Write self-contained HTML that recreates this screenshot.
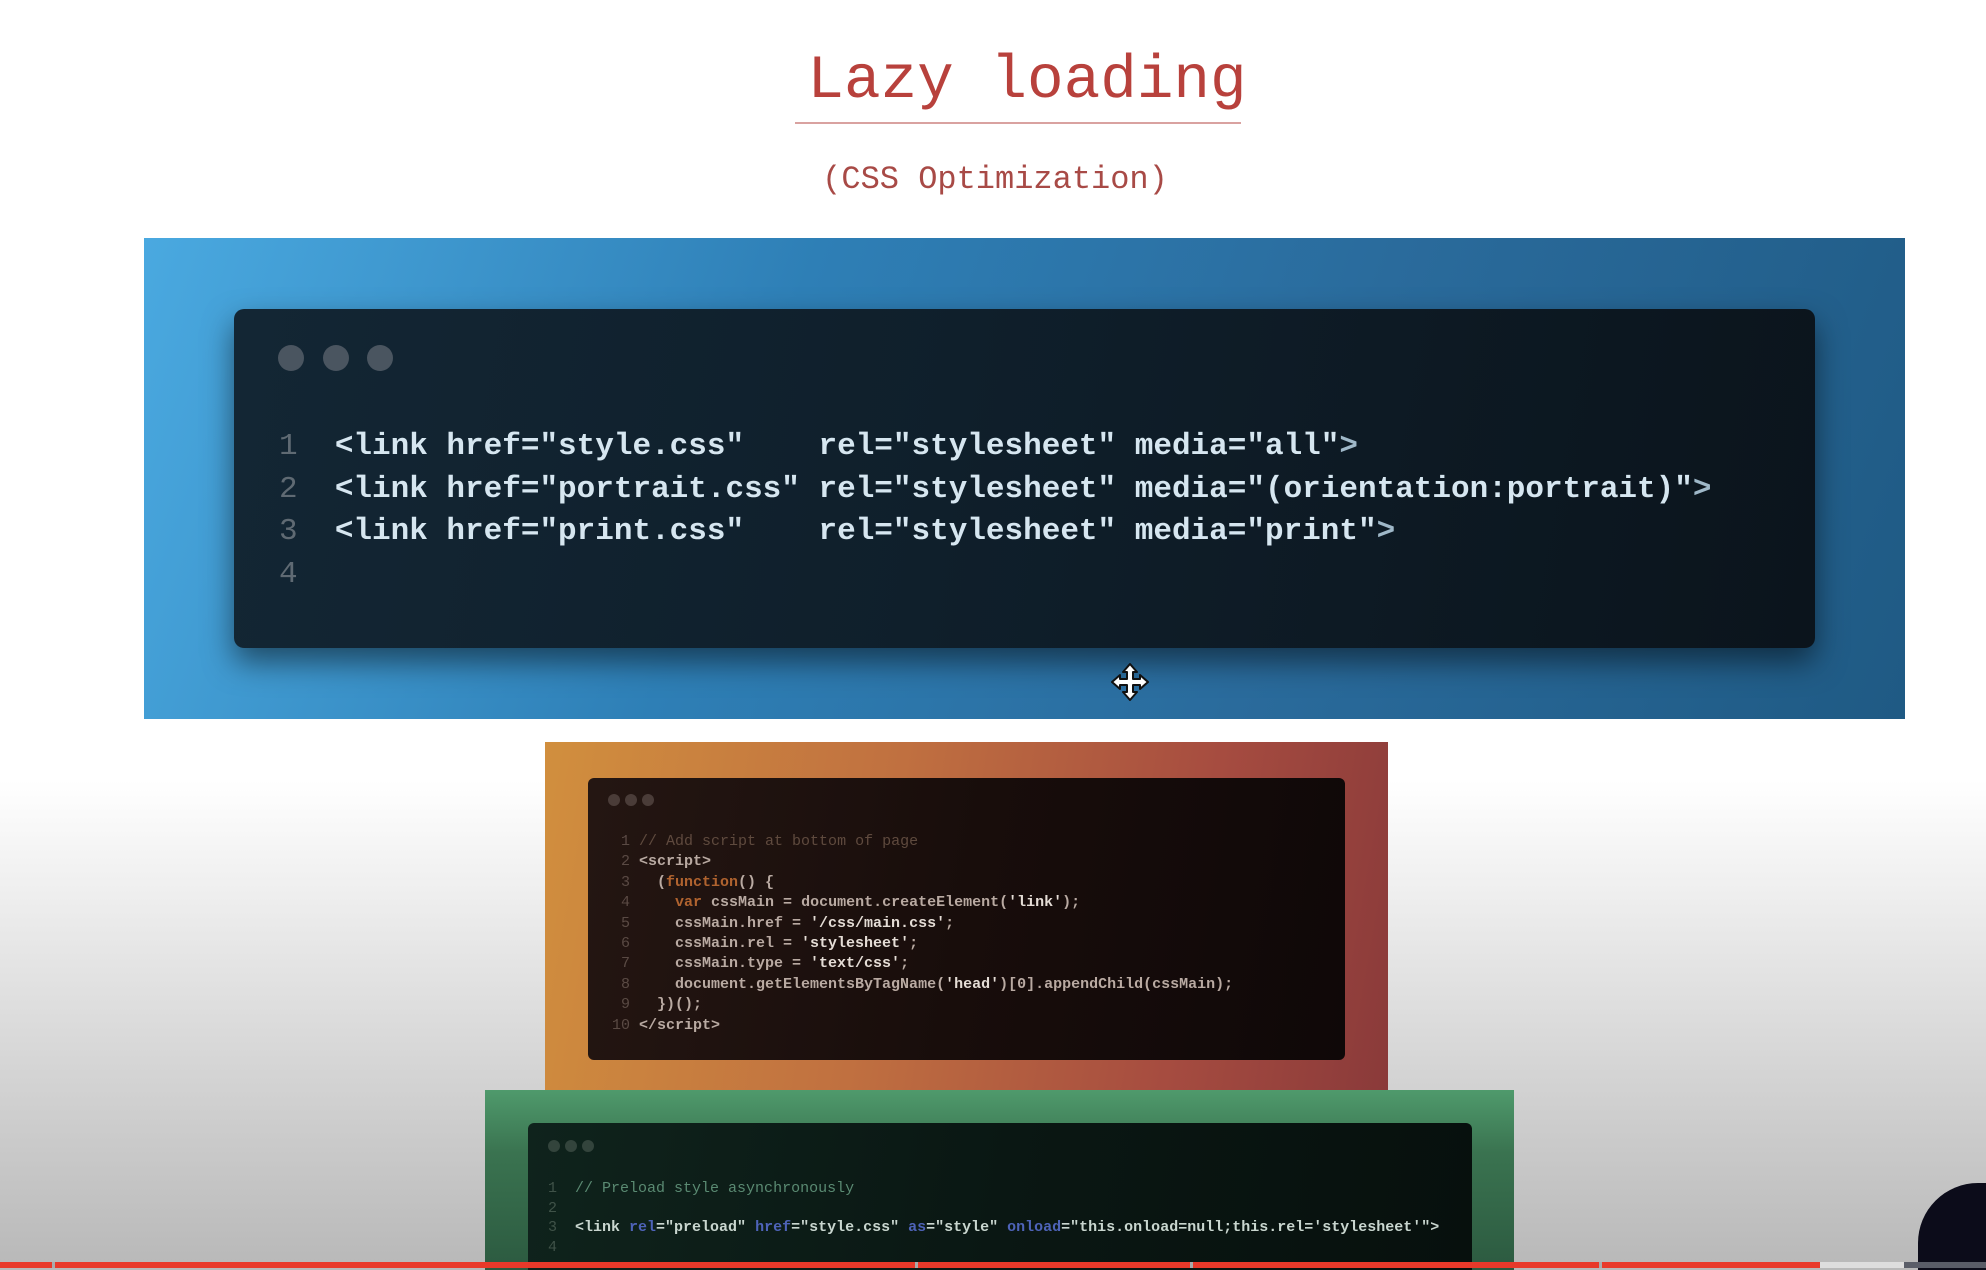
<!DOCTYPE html>
<html><head><meta charset="utf-8"><style>
*{margin:0;padding:0;box-sizing:border-box}
html,body{width:1986px;height:1270px;overflow:hidden}
body{position:relative;font-family:"Liberation Mono",monospace}
#wrap{position:absolute;left:0;top:0;width:1986px;height:1270px;overflow:hidden;background:linear-gradient(#fff 0,#fff 780px,#e6e6e6 950px,#c9c9c9 1150px,#b8b8b8 1270px)}
.abs{position:absolute}
.title{left:0;width:2054px;top:47px;text-align:center;font-size:61px;color:#b8413c}
.uline{left:795px;top:122px;width:446px;height:2px;background:#d9a2a0}
.sub{left:0;width:1990px;top:161px;text-align:center;font-size:32px;color:#a84a46}
.blue{left:144px;top:238px;width:1761px;height:481px;background:linear-gradient(110deg,#4aa9e0 0%,#2e7fb6 35%,#2a6b9c 65%,#1f5a84 100%)}
.win{border-radius:10px;box-shadow:0 14px 30px rgba(0,0,0,.5)}
.w1{left:234px;top:309px;width:1581px;height:339px;background:linear-gradient(100deg,#132634 0%,#0f1f2b 45%,#0b141c 100%)}
.dot{position:absolute;border-radius:50%;background:#4a5560}
.code1{left:279px;top:426px;font-size:31px;font-weight:bold;line-height:42.6px;color:#d6e6f0;white-space:pre}
.code1 .n{color:#5f6a73;font-weight:normal}
.code1 .t{color:#9fb8c8}
.orange{left:545px;top:742px;width:843px;height:348px;background:linear-gradient(100deg,#d18f3e 0%,#c07040 40%,#a64c40 75%,#8a3a3a 100%)}
.w2{left:588px;top:778px;width:757px;height:282px;background:linear-gradient(100deg,#241612,#180d0b 50%,#0f0808);border-radius:6px}
.code2{left:612px;top:832px;font-size:15px;line-height:20.4px;color:#b9aaa2;white-space:pre;font-weight:bold}
.code2 .n{color:#5a4a44;font-weight:normal}.code2 .c{color:#5f4a3e;font-weight:normal}.code2 .k{color:#b0632f}.code2 .s{color:#e5ddd6}
.green{left:485px;top:1090px;width:1029px;height:180px;background:linear-gradient(180deg,#4f9a6c 0%,#3a7350 35%,#2c5a40 100%)}
.w3{left:528px;top:1123px;width:944px;height:160px;background:linear-gradient(100deg,#0f231c,#0a1713 50%,#07100d);border-radius:6px}
.code3{left:548px;top:1179px;font-size:15px;line-height:19.5px;color:#c9d6cf;white-space:pre;font-weight:bold}
.code3 .n{color:#3f5248;font-weight:normal}.code3 .c{color:#5a8a72;font-weight:normal}.code3 .a{color:#4e63b8}
.bar{top:1262px;height:6px}
</style></head><body><div id="wrap">
<div class="abs title">Lazy loading</div>
<div class="abs uline"></div>
<div class="abs sub">(CSS Optimization)</div>

<div class="abs blue"></div>
<div class="abs win w1">
<div class="dot" style="left:44px;top:36px;width:26px;height:26px"></div>
<div class="dot" style="left:89px;top:36px;width:26px;height:26px"></div>
<div class="dot" style="left:133px;top:36px;width:26px;height:26px"></div>
</div>
<div class="abs code1"><span class="n">1</span>  &lt;link href="style.css"    rel="stylesheet" media="all"<span class="t">&gt;</span>
<span class="n">2</span>  &lt;link href="portrait.css" rel="stylesheet" media="(orientation:portrait)"<span class="t">&gt;</span>
<span class="n">3</span>  &lt;link href="print.css"    rel="stylesheet" media="print"<span class="t">&gt;</span>
<span class="n">4</span></div>
<svg class="abs" style="left:1109px;top:661px" width="42" height="42" viewBox="0 0 42 42"><path d="M21 3 L28 11 H24 V18 H31 V14 L39 21 L31 28 V24 H24 V31 H28 L21 39 L14 31 H18 V24 H11 V28 L3 21 L11 14 V18 H18 V11 H14 Z" fill="#fff" stroke="#111" stroke-width="2" stroke-linejoin="round"/></svg>

<div class="abs orange"></div>
<div class="abs w2">
<div class="dot" style="left:20px;top:16px;width:12px;height:12px;background:#4a3c38"></div>
<div class="dot" style="left:37px;top:16px;width:12px;height:12px;background:#4a3c38"></div>
<div class="dot" style="left:54px;top:16px;width:12px;height:12px;background:#4a3c38"></div>
</div>
<div class="abs code2"><span class="n"> 1</span> <span class="c">// Add script at bottom of page</span>
<span class="n"> 2</span> &lt;script&gt;
<span class="n"> 3</span>   (<span class="k">function</span>() {
<span class="n"> 4</span>     <span class="k">var</span> cssMain = document.createElement(<span class="s">'link'</span>);
<span class="n"> 5</span>     cssMain.href = <span class="s">'/css/main.css'</span>;
<span class="n"> 6</span>     cssMain.rel = <span class="s">'stylesheet'</span>;
<span class="n"> 7</span>     cssMain.type = <span class="s">'text/css'</span>;
<span class="n"> 8</span>     document.getElementsByTagName(<span class="s">'head'</span>)[0].appendChild(cssMain);
<span class="n"> 9</span>   })();
<span class="n">10</span> &lt;/script&gt;</div>

<div class="abs green"></div>
<div class="abs w3">
<div class="dot" style="left:20px;top:17px;width:12px;height:12px;background:#33443c"></div>
<div class="dot" style="left:37px;top:17px;width:12px;height:12px;background:#33443c"></div>
<div class="dot" style="left:54px;top:17px;width:12px;height:12px;background:#33443c"></div>
</div>
<div class="abs code3"><span class="n">1</span>  <span class="c">// Preload style asynchronously</span>
<span class="n">2</span>
<span class="n">3</span>  &lt;link <span class="a">rel</span>="preload" <span class="a">href</span>="style.css" <span class="a">as</span>="style" <span class="a">onload</span>="this.onload=null;this.rel='stylesheet'"&gt;
<span class="n">4</span></div>

<div class="abs" style="left:1918px;top:1183px;width:120px;height:140px;border-radius:60px 0 0 0;background:#0c0c1a"></div>

<div class="abs bar" style="left:0;width:1820px;background:#e8392a"></div>
<div class="abs bar" style="left:52px;width:3px;background:#aaa"></div>
<div class="abs bar" style="left:915px;width:3px;background:#aaa"></div>
<div class="abs bar" style="left:1190px;width:3px;background:#aaa"></div>
<div class="abs bar" style="left:1599px;width:3px;background:#aaa"></div>
<div class="abs bar" style="left:1820px;width:84px;background:#ddd"></div>
<div class="abs bar" style="left:1904px;width:82px;background:#5a5d68"></div>
</div></body></html>
